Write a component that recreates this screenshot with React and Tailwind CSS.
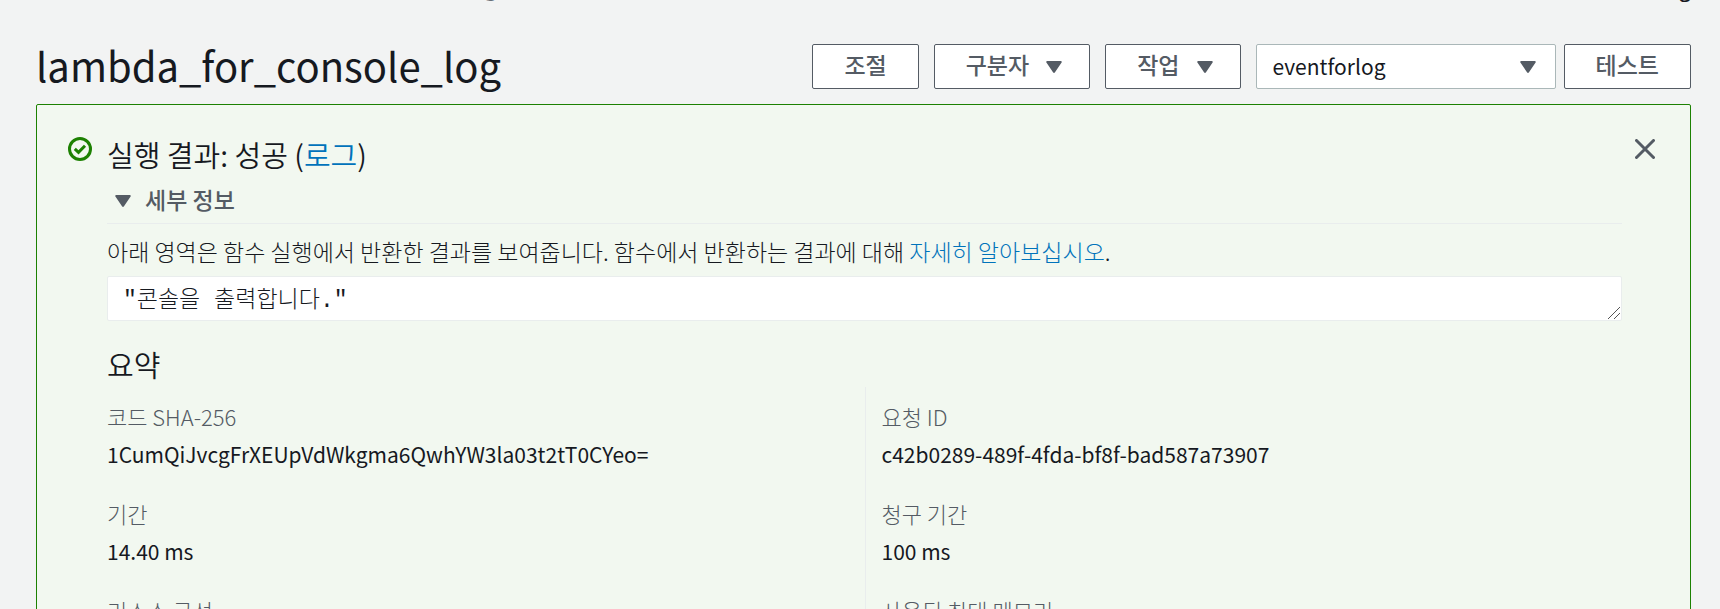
const summary = [
  { label: "코드 SHA-256", value: "1CumQiJvcgFrXEUpVdWkgma6QwhYW3la03t2tT0CYeo=" },
  { label: "요청 ID", value: "c42b0289-489f-4fda-bf8f-bad587a73907" },
  { label: "기간", value: "14.40 ms" },
  { label: "청구 기간", value: "100 ms" },
  { label: "리소스 구성" },
  { label: "사용된 최대 메모리" },
];

function Caret() {
  return (
    <svg aria-hidden="true" viewBox="0 0 16 12" className="h-3 w-4 shrink-0 fill-[#545b64]">
      <path d="M1.2 0H14.8a1 1 0 0 1 .8 1.6L9 11.3a1.3 1.3 0 0 1-2 0L.4 1.6A1 1 0 0 1 1.2 0Z" />
    </svg>
  );
}

function Button({ children, menu = false }) {
  return (
    <button
      type="button"
      className={
        "flex h-[45px] items-center rounded-xs border border-[#545b64] bg-white pl-[31px] text-[23px] leading-6 font-medium text-[#545b64] " +
        (menu ? "gap-[17px] pr-[27px]" : "pr-[31px]")
      }
    >
      <span className="pb-[5px]">{children}</span>
      {menu && <Caret />}
    </button>
  );
}

export default function App() {
  return (
    <div className="flow-root h-screen overflow-hidden bg-[#f2f3f3] pr-[29px] pl-9 font-['Noto_Sans_CJK_KR',sans-serif] text-[#16191f]">
      <nav aria-label="이동 경로" className="-mt-[26px] flex h-7 justify-between text-[21px] leading-7">
        <span className="pl-[216px] leading-[26px] text-[#687078]">lambda_for_console_log</span>
        <span className="font-medium">lambda_for_console_log</span>
      </nav>
      <header className="flex items-center justify-between pt-[42px]">
        <h1 className="pb-1 text-[40px] leading-10">lambda_for_console_log</h1>
        <div className="flex gap-[15px]">
          <Button>조절</Button>
          <Button menu>구분자</Button>
          <Button menu>작업</Button>
          <div className="flex gap-2">
            <div className="grid items-center">
              <select aria-label="테스트 이벤트" className="col-start-1 row-start-1 h-[45px] w-[300px] appearance-none rounded-xs border border-[#aab7b8] bg-white px-4 text-[21px]">
                <option>eventforlog</option>
              </select>
              <span className="pointer-events-none col-start-1 row-start-1 justify-self-end pr-5"><Caret /></span>
            </div>
            <Button>테스트</Button>
          </div>
        </div>
      </header>

      <main className="mt-[15px] flex min-h-screen items-start rounded-xs border border-[#1d8102] bg-[#f2f8f0] pr-[35px] pl-[31px]">
        <svg aria-hidden="true" viewBox="0 0 24 24" className="mt-8 size-6 shrink-0 fill-none stroke-[#1d8102] stroke-3">
          <circle cx="12" cy="12" r="10.5" />
          <path d="M6.8 11.8l3.7 3.5 6.5-6.6" />
        </svg>
        <div className="ml-[15px] min-w-0 flex-1 pt-[29px]">
          <h2 className="text-[29px] leading-10 font-[350]">
            실행 결과: 성공 (<a href="#log" className="text-[#0073bb]">로그</a>)
          </h2>
          <button type="button" className="flex w-full items-center gap-[14px] border-b border-[#e9eded] pt-[7px] pb-[6px] pl-2 text-[23px] leading-9 font-medium text-[#545b64]">
            <span className="pt-1"><Caret /></span>
            <span>세부 정보</span>
          </button>
          <p className="pt-[11px] text-[23px] leading-8 font-light">
            아래 영역은 함수 실행에서 반환한 결과를 보여줍니다. 함수에서 반환하는 결과에 대해{" "}
            <a href="#learn-more" className="text-[#0073bb]">자세히 알아보십시오</a>.
          </p>
          <div className="mt-[9px] grid">
            <textarea
              aria-label="실행 결과"
              readOnly
              rows={1}
              defaultValue={'"콘솔을 출력합니다."'}
              className="col-start-1 row-start-1 block h-[45px] w-full resize-none overflow-hidden rounded-xs border border-[#e9eded] bg-white px-[15px] pt-2 font-['Liberation_Mono','Noto_Sans_CJK_KR',monospace] text-[23px] leading-8 font-light"
            />
            <svg aria-hidden="true" viewBox="0 0 12 12" className="pointer-events-none col-start-1 row-start-1 mr-[2px] mb-[2px] size-3 self-end justify-self-end stroke-[#545454]">
              <path d="M0 12L12 0M6 12l6-6" />
            </svg>
          </div>
          <h3 className="pt-[23px] text-[29px] leading-10 font-[350]">요약</h3>
          <dl className="mt-[3px] grid grid-cols-2">
            {summary.map(({ label, value }) => (
              <div key={label} className="h-[97px] pt-[13px] even:border-l even:border-[#e9eded] even:pl-4">
                <dt className="text-[22px] leading-8 font-light text-[#545b64]">{label}</dt>
                {value && <dd className="mt-[7px] text-[21px] leading-[30px]">{value}</dd>}
              </div>
            ))}
          </dl>
        </div>
        <button type="button" aria-label="닫기" className="mt-[34px] ml-[13px]">
          <svg aria-hidden="true" viewBox="0 0 20 20" className="size-5 stroke-[#545b64] stroke-3 [stroke-linecap:round]">
            <path d="M1.5 1.5l17 17M18.5 1.5l-17 17" />
          </svg>
        </button>
      </main>
    </div>
  );
}
